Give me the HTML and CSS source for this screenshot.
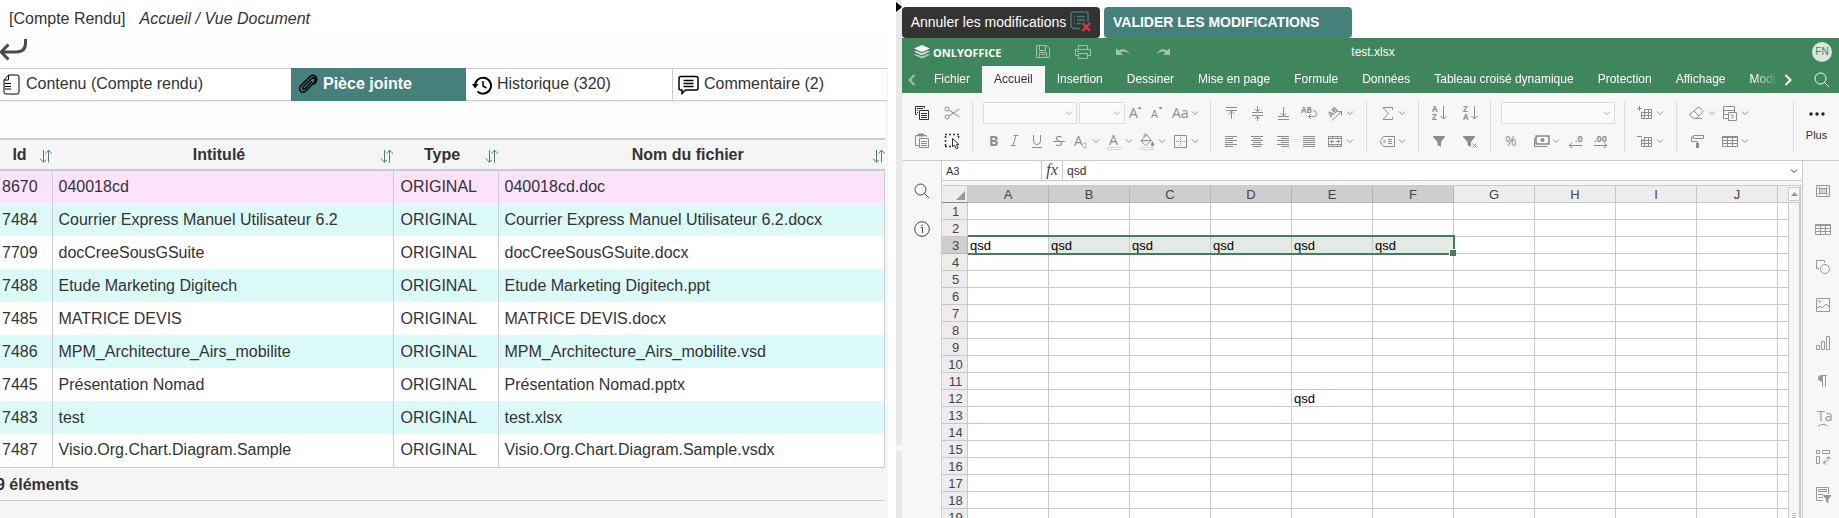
FILE: index.html
```html
<!DOCTYPE html>
<html lang="fr">
<head>
<meta charset="utf-8">
<title>Vue Document</title>
<link rel="stylesheet" href="styles.css">
</head>
<body>
<svg class="defs" aria-hidden="true">
  <symbol id="chev" viewBox="0 0 8 8"><path d="M1 2.5L4 5.5L7 2.5"/></symbol>
  <symbol id="sort" viewBox="0 0 14 14"><path d="M4.5 1V13M.8 9.5L4.5 13.2L7 11M9.500 13.5V1.5M6.500 4.5L9.5 1.2L13 4.5"/></symbol>
  <symbol id="search" viewBox="0 0 16 16"><circle cx="6.5" cy="6.5" r="5.5"/><path d="M10.5 10.5L15 15"/></symbol>
</svg>
<div class="app">
  <section class="doc">
    <header class="crumbs"><span>[Compte Rendu]</span><nav><a href="#">Accueil</a> / <a href="#">Vue Document</a></nav></header>
    <div class="back-row"><button class="back" aria-label="Retour"><svg width="28" height="24" viewBox="0 0 28 24"><path d="M25.500 1V5C25.500 11 22 14 16 14H2M8.500 6.500L1 14L8.500 21.500"/></svg></button></div>
    <nav class="doc-tabs">
      <a href="#" class="tab-content"><svg width="18" height="21" viewBox="0 0 18 21"><path d="M6.500 1H15Q17 1 17 3V18Q17 20 15 20H4Q2 20 2 18V6Z"/><path d="M6.500 1V6H2M3 9.500H9M3 12.500H9M3 15H9"/></svg>Contenu (Compte rendu)</a>
      <a href="#" class="tab-file"><svg width="20" height="21" viewBox="0 0 20 21"><path stroke-width="1.500" d="M14 7.500L7.500 14.500Q6 16 5 15Q4 14 5.500 12.500L13 5Q15 3 16.500 4.500Q18 6 16.500 8L8.500 16.500Q5.500 19.500 3 17.500Q0 15 3 11.500L11.500 3Q14.500 0 17.500 2.500Q20 5.500 17.500 8.500L15.500 10.500"/></svg>Pièce jointe</a>
      <a href="#" class="tab-history"><svg width="20" height="20" viewBox="0 0 20 20"><path stroke-width="2" d="M3 10.500A8 8 0 1 1 5.500 16.500"/><path fill="#000" stroke="none" d="M0 9H6.500L3.200 13.500Z"/><path stroke-width="1.500" d="M11 6V11L14.500 13"/></svg>Historique (320)</a>
      <a href="#" class="tab-comment"><svg width="21" height="20" viewBox="0 0 21 20"><path stroke-width="1.500" d="M2.500 1.500H18Q20 1.500 20 3.500V13Q20 15 18 15H7.500L4 18.500V15H2.500Q1 15 1 13V3.500Q1 1.500 2.500 1.500Z"/><path stroke-width="1.500" d="M5.500 5.500H15.500M5.500 8.500H15.500M5.500 11.500H15.500"/></svg>Commentaire (2)</a>
    </nav>
    <div class="panel-top"></div>
    <table class="files">
      <colgroup><col class="c-id"><col class="c-title"><col class="c-type"><col class="c-name"></colgroup>
      <thead><tr>
        <th class="first"><div><span>Id</span><button aria-label="Trier par id"><svg><use href="#sort"/></svg></button></div></th>
        <th><div><span>Intitulé</span><button aria-label="Trier par intitulé"><svg><use href="#sort"/></svg></button></div></th>
        <th><div><span>Type</span><button aria-label="Trier par type"><svg><use href="#sort"/></svg></button></div></th>
        <th><div><span>Nom du fichier</span><button aria-label="Trier par nom"><svg><use href="#sort"/></svg></button></div></th>
      </tr></thead>
      <tbody>
        <tr class="current"><td>8670</td><td>040018cd</td><td>ORIGINAL</td><td>040018cd.doc</td></tr>
        <tr><td>7484</td><td>Courrier Express Manuel Utilisateur 6.2</td><td>ORIGINAL</td><td>Courrier Express Manuel Utilisateur 6.2.docx</td></tr>
        <tr><td>7709</td><td>docCreeSousGSuite</td><td>ORIGINAL</td><td>docCreeSousGSuite.docx</td></tr>
        <tr><td>7488</td><td>Etude Marketing Digitech</td><td>ORIGINAL</td><td>Etude Marketing Digitech.ppt</td></tr>
        <tr><td>7485</td><td>MATRICE DEVIS</td><td>ORIGINAL</td><td>MATRICE DEVIS.docx</td></tr>
        <tr><td>7486</td><td>MPM_Architecture_Airs_mobilite</td><td>ORIGINAL</td><td>MPM_Architecture_Airs_mobilite.vsd</td></tr>
        <tr><td>7445</td><td>Présentation Nomad</td><td>ORIGINAL</td><td>Présentation Nomad.pptx</td></tr>
        <tr><td>7483</td><td>test</td><td>ORIGINAL</td><td>test.xlsx</td></tr>
        <tr><td>7487</td><td>Visio.Org.Chart.Diagram.Sample</td><td>ORIGINAL</td><td>Visio.Org.Chart.Diagram.Sample.vsdx</td></tr>
      </tbody>
    </table>
    <div class="count">9 éléments</div>
  </section>

  <div class="splitter"><svg width="6" height="10" viewBox="0 0 6 10"><path d="M0 0L6 5L0 10Z"/></svg><i></i></div>

  <section class="office">
    <div class="actions">
      <button class="cancel">Annuler les modifications<svg width="21" height="21" viewBox="0 0 21 21"><path d="M10 17.500H4L1 16V3Q1 1 3 1H16Q18 1 18 3V11M7 5.500H15M7 9H15M7 12.500H11M4 5.500H5M4 9H5M4 12.500H5" stroke="#3d7f76" stroke-width="1.500"/><path d="M12.500 12L20 20M20 12L12.500 20" stroke="#dc3545" stroke-width="2.500"/></svg></button>
      <button class="validate">VALIDER LES MODIFICATIONS</button>
    </div>
    <header class="titlebar">
      <div class="brand"><svg width="16" height="14" viewBox="0 0 16 14"><path d="M8 0L16 3.500L8 7L0 3.500Z" fill="#fff"/><path d="M0 6.500L2 5.700L8 8.300L14 5.700L16 6.500L8 10.200Z" fill="#fff" opacity=".8"/><path d="M0 9.700L2 9L8 11.500L14 9L16 9.700L8 13.500Z" fill="#fff" opacity=".6"/></svg>ONLYOFFICE</div>
      <div class="quick">
        <button aria-label="Enregistrer"><svg class="ic"><path d="M3.500 3.500H13.500L16.500 6.500V15.500H3.500ZM6.500 3.500V8.500H12.500V3.500M6.500 15.500V10.500H13.500V15.500M8 12.500H12"/></svg></button>
        <button aria-label="Imprimer"><svg class="ic"><path d="M5.500 7V3.500H14.500V7M5 13.500H2.500V7.500H17.500V13.500H15M5.500 11.500H14.500V16.500H5.500ZM4 9.500H6"/></svg></button>
        <button aria-label="Annuler"><svg class="ic"><path fill="currentColor" stroke="none" d="M3 6V13H10L7.500 10.500Q12 8 17 12.500Q12.500 4.500 5.500 8.500Z"/></svg></button>
        <button aria-label="Rétablir"><svg class="ic"><path fill="currentColor" stroke="none" d="M17 6V13H10L12.500 10.500Q8 8 3 12.500Q7.500 4.500 14.500 8.500Z"/></svg></button>
      </div>
      <span class="filename">test.xlsx</span>
      <span class="avatar">FN</span>
    </header>
    <nav class="ribbon-tabs">
      <button class="scroll prev" aria-label="Précédent"><svg width="8" height="12" viewBox="0 0 8 12"><path d="M6.500 1L1.500 6L6.500 11"/></svg></button>
      <div class="tab-list"><a href="#">Fichier</a><a href="#" class="on">Accueil</a><a href="#">Insertion</a><a href="#">Dessiner</a><a href="#">Mise en page</a><a href="#">Formule</a><a href="#">Données</a><a href="#">Tableau croisé dynamique</a><a href="#">Protection</a><a href="#">Affichage</a><a href="#">Modules</a></div>
      <button class="scroll next" aria-label="Suivant"><svg width="8" height="12" viewBox="0 0 8 12"><path d="M1.500 1L6.500 6L1.500 11"/></svg></button>
      <button class="find" aria-label="Rechercher"><svg width="16" height="16"><use href="#search"/></svg></button>
    </nav>

    <div class="toolbar">
      <div class="group clip">
        <div class="line"><button class="dark" aria-label="Copier"><svg class="ic"><path d="M5 11.500H3.500V3.500H12.500V5M5 5.500H11M5 7.500H6M5 9.500H6M7.500 7.500H16.500V16.500H7.500ZM9 10.500H15M9 12.500H15M9 14.500H15"/></svg></button><button aria-label="Couper"><svg class="ic"><circle cx="5" cy="6" r="2"/><circle cx="5" cy="14" r="2"/><path d="M7 7L17.500 14M7 13L17.500 6"/></svg></button></div>
        <div class="line"><button aria-label="Coller"><svg class="ic"><path d="M7 14.500H3.500V4.500H14.500V6M7.500 7.500H16.500V16.500H7.500ZM9 10.500H15M9 12.500H15M9 14.500H15"/><path d="M6 4H12" stroke-width="3"/></svg></button><button class="dark" aria-label="Sélectionner tout"><svg class="ic"><path stroke-dasharray="2 2" stroke-width="1.500" d="M3 3.500H17M3.500 5V17M3 15.500H9M16.500 5V9"/><path d="M10.500 7.500V16L12.500 14L14.500 18L16 17L14.500 13.500H17Z"/></svg></button></div>
      </div>
      <div class="group font">
        <div class="line combo-line"><select class="w-font" aria-label="Police"></select><select class="w-size" aria-label="Taille"></select><button class="lt" aria-label="Agrandir"><svg class="ic"><text x="3" y="15">A</text><path class="solid" d="M11.500 6L13.500 3.500L15.500 6Z"/></svg></button><button class="lt" aria-label="Réduire"><svg class="ic"><text x="3" y="15" class="sm">A</text><path class="solid" d="M10.500 4L12.500 6.500L14.500 4Z"/></svg></button><button class="drop" aria-label="Casse"><svg class="ic"><text x="2" y="15">Aa</text></svg><svg class="cv"><use href="#chev"/></svg></button></div>
        <div class="line"><button aria-label="Gras"><svg class="ic"><text x="6" y="15" class="b">B</text></svg></button><button aria-label="Italique"><svg class="ic"><path d="M8.500 4.500H13.500M5.500 14.500H10.500M11 4.500L8 14.500"/></svg></button><button aria-label="Souligné"><svg class="ic"><path d="M6.500 4V10Q6.500 13.500 10 13.500Q13.500 13.500 13.500 10V4M5 16.500H15"/></svg></button><button aria-label="Barré"><svg class="ic"><text x="6" y="15">S</text><path d="M4 10.500H16"/></svg></button><button class="drop" aria-label="Indice"><svg class="ic"><text x="3" y="15">A</text><text x="12" y="17" class="xs">2</text></svg><svg class="cv"><use href="#chev"/></svg></button><button class="drop" aria-label="Couleur"><svg class="ic"><text x="5" y="14">A</text><path class="swatch" d="M3.500 16.500H16.500V18.500H3.500Z"/></svg><svg class="cv"><use href="#chev"/></svg></button><button class="drop" aria-label="Remplissage"><svg class="ic"><path d="M4.500 9L9.500 4L14.500 9.500L9.500 14Q8.500 14.500 7.500 13.500L4.500 10.500ZM5 9.500H14M7 6V5Q7 2.500 9 3L10.500 5"/><path class="solid" d="M15.500 10Q17.500 13 17 14.500Q15.500 16 14 14.500Q13.500 13 15.500 10Z"/><path class="swatch" d="M3.500 16.500H16.500V18.500H3.500Z"/></svg><svg class="cv"><use href="#chev"/></svg></button><button class="drop" aria-label="Bordures"><svg class="ic"><path d="M4.500 4.500H16.500V16.500H4.500Z"/><path stroke-dasharray="1 1" d="M10.500 6V16M6 10.500H16"/></svg><svg class="cv"><use href="#chev"/></svg></button></div>
      </div>
      <div class="group wide">
        <div class="line"><button aria-label="Aligner en haut"><svg class="ic"><path d="M5 4.500H16M5 7.500H16M10.500 16V8M7.500 11L10.500 8L13.500 11"/></svg></button><button aria-label="Aligner au milieu"><svg class="ic"><path d="M5 9.500H16M5 12.500H16M10.500 3V9M8 6L10.500 8.500L13 6M10.500 18V13M8 16L10.500 13.500L13 16"/></svg></button><button aria-label="Aligner en bas"><svg class="ic"><path d="M5 13.500H16M5 16.500H16M10.500 4V13M7.500 10L10.500 13L13.500 10"/></svg></button><button aria-label="Renvoi à la ligne"><svg class="ic"><text x="2" y="10" class="xb">AB</text><path d="M14 7.500Q17.500 7.500 17.500 11Q17.500 13.500 15 13.500H10M12 11L9.500 13.500L12 16"/></svg></button><button class="drop" aria-label="Orientation"><svg class="ic"><text x="3" y="12" class="xb" transform="rotate(-45 8 10)">AB</text><path d="M7 17.500L16.500 8.500M12.500 8.500H16.500V12.500"/></svg><svg class="cv"><use href="#chev"/></svg></button></div>
        <div class="line"><button aria-label="Gauche"><svg class="ic"><path d="M4 5.500H16M4 7.500H12M4 9.500H16M4 11.500H12M4 13.500H16M4 15.500H12"/></svg></button><button aria-label="Centrer"><svg class="ic"><path d="M4 5.500H16M6 7.500H14M4 9.500H16M6 11.500H14M4 13.500H16M6 15.500H14"/></svg></button><button aria-label="Droite"><svg class="ic"><path d="M4 5.500H16M8 7.500H16M4 9.500H16M8 11.500H16M4 13.500H16M8 15.500H16"/></svg></button><button aria-label="Justifier"><svg class="ic"><path d="M4 5.500H16M4 7.500H16M4 9.500H16M4 11.500H16M4 13.500H16M4 15.500H16"/></svg></button><button class="drop" aria-label="Fusionner"><svg class="ic"><path d="M3.500 5.500H16.500V15.500H3.500ZM3.500 7.500H16.500M3.500 13.500H16.500M7.500 5V7M12.500 5V7M7.500 14V16M12.500 14V16M5 10.500H9M11 10.500H15M7 9L5.500 10.500L7 12M13 9L14.500 10.500L13 12"/></svg><svg class="cv"><use href="#chev"/></svg></button></div>
      </div>
      <div class="group">
        <div class="line"><button class="drop" aria-label="Somme"><svg class="ic"><path d="M15.500 7V4.500H6L11.500 10.500L6 16.500H15.500V14"/></svg><svg class="cv"><use href="#chev"/></svg></button></div>
        <div class="line"><button class="drop" aria-label="Plages nommées"><svg class="ic"><path d="M3 10.500L6.500 5.500H17.500V15.500H6.500ZM11 8.500H15M11 10.500H15M11 12.500H15"/><circle cx="7.500" cy="10.500" r="1"/></svg><svg class="cv"><use href="#chev"/></svg></button></div>
      </div>
      <div class="group filters">
        <div class="line"><button aria-label="Tri croissant"><svg class="ic"><text x="3" y="9" class="xb">A</text><text x="3" y="17" class="xb">Z</text><path d="M14.500 3V16M11.500 13L14.500 16L17.500 13"/></svg></button><button aria-label="Tri décroissant"><svg class="ic"><text x="3" y="9" class="xb">Z</text><text x="3" y="17" class="xb">A</text><path d="M14.500 3V16M11.500 13L14.500 16L17.500 13"/></svg></button></div>
        <div class="line"><button aria-label="Filtrer"><svg class="ic"><path class="solid" d="M4 5H16V6L12 11V16L8.500 14V11L4 6Z"/></svg></button><button aria-label="Effacer le filtre"><svg class="ic"><path class="solid" d="M3 5H15V6L11 11V16L7.500 14V11L3 6Z"/><path d="M12.500 12.500L16.500 16.500M16.500 12.500L12.500 16.500"/></svg></button></div>
      </div>
      <div class="group">
        <div class="line combo-line"><select class="w-format" aria-label="Format de nombre"></select></div>
        <div class="line formats"><button class="percent" aria-label="Pourcentage"><svg class="ic"><text x="4" y="15">%</text></svg></button><button class="drop" aria-label="Devise"><svg class="ic"><path stroke-width="1.500" d="M5 5H18V13H5Z"/><path d="M3.500 7V15.500H16"/><circle class="solid" cx="11.500" cy="9" r="2"/><path d="M5 7L7 5M16 5L18 7M5 11L7 13M16 13L18 11"/></svg><svg class="cv"><use href="#chev"/></svg></button><button aria-label="Réduire les décimales"><svg class="ic"><text x="9" y="11" class="dec">.0</text><path d="M16 14.500H3M6 12L3.500 14.500L6 17"/></svg></button><button aria-label="Ajouter une décimale"><svg class="ic"><text x="4" y="11" class="dec">.00</text><path d="M4 14.500H17M14 12L16.500 14.500L14 17"/></svg></button></div>
      </div>
      <div class="group">
        <div class="line"><button class="drop" aria-label="Insérer des cellules"><svg class="ic"><path d="M2 5.500H7M4.500 3V8M9 6.500H16.500V15.500H6.500V9M6.500 9.500H16.500M6.500 12.500H16.500M9.500 6.500V15.500M13.500 6.500V15.500"/></svg><svg class="cv"><use href="#chev"/></svg></button></div>
        <div class="line"><button class="drop" aria-label="Supprimer des cellules"><svg class="ic"><path d="M2 5.500H7M9 6.500H16.500V15.500H6.500V8M6.500 9.500H16.500M6.500 12.500H16.500M9.500 6.500V15.500M13.500 6.500V15.500"/></svg><svg class="cv"><use href="#chev"/></svg></button></div>
      </div>
      <div class="group last">
        <div class="line"><button class="drop" aria-label="Effacer"><svg class="ic"><path d="M3 11L11 4.500Q12 4 13 5L15.500 7.500Q16.500 8.500 15.500 9.500L9 15.500H7L3.500 13Q2.500 12 3 11ZM7 8L12 13M9 15.500H15"/></svg><svg class="cv"><use href="#chev"/></svg></button><button class="drop" aria-label="Mise en forme conditionnelle"><svg class="ic"><path d="M8 15.500H3.500V3.500H14.500V9M3.500 7.500H14.500M3.500 11.500H8M8.500 9.500H16.500V17.500H8.500ZM11 11.500L13.500 13.500L11 15.500"/></svg><svg class="cv"><use href="#chev"/></svg></button></div>
        <div class="line"><button class="drop" aria-label="Copier le style"><svg class="ic"><path d="M6.500 4.500H16.500V7.500H6.500ZM6.500 6H4.500V10.500H10.500V12"/><path d="M10.500 12V17" stroke-width="3"/></svg></button><button class="drop" aria-label="Mettre en tableau"><svg class="ic"><path d="M2.500 5.500H17.500V15.500H2.500ZM2.500 9.500H17.500M2.500 12.500H17.500M7.500 5.500V15.500M12.500 5.500V15.500M2.500 6.500H17.500"/></svg><svg class="cv"><use href="#chev"/></svg></button></div>
      </div>
      <button class="more"><svg width="16" height="4" viewBox="0 0 16 4"><circle cx="2" cy="2" r="1.700"/><circle cx="8" cy="2" r="1.700"/><circle cx="14" cy="2" r="1.700"/></svg>Plus</button>
    </div>

    <div class="work">
      <aside class="side left"><button aria-label="Rechercher"><svg width="16" height="16"><use href="#search"/></svg></button><button aria-label="À propos"><svg width="16" height="16" viewBox="0 0 16 16"><circle cx="8" cy="8" r="7.300"/><path d="M7 6.500H8.500V12M8 3.500V5"/></svg></button></aside>
      <div class="center">
        <div class="formula"><input class="cell-name" aria-label="Zone de nom" value="A3"><span class="fx">fx</span><input class="expr" aria-label="Formule" value="qsd"><button aria-label="Développer"><svg class="cv"><use href="#chev"/></svg></button></div>
        <div class="sheet">
          <div class="grid-wrap">
          <table class="grid">
            <thead><tr><th class="corner"><svg width="9" height="9" viewBox="0 0 9 9"><path d="M9 0V9H0Z"/></svg></th><th class="sel">A</th><th class="sel">B</th><th class="sel">C</th><th class="sel">D</th><th class="sel">E</th><th class="sel">F</th><th>G</th><th>H</th><th>I</th><th>J</th><th></th></tr></thead>
            <tbody>
            <tr><th>1<td><td><td><td><td><td><td><td><td><td><td>
            <tr><th>2<td><td><td><td><td><td><td><td><td><td><td>
            <tr class="picked"><th>3<td>qsd<td>qsd<td>qsd<td>qsd<td>qsd<td>qsd<td><td><td><td><td>
            <tr><th>4<td><td><td><td><td><td><td><td><td><td><td>
            <tr><th>5<td><td><td><td><td><td><td><td><td><td><td>
            <tr><th>6<td><td><td><td><td><td><td><td><td><td><td>
            <tr><th>7<td><td><td><td><td><td><td><td><td><td><td>
            <tr><th>8<td><td><td><td><td><td><td><td><td><td><td>
            <tr><th>9<td><td><td><td><td><td><td><td><td><td><td>
            <tr><th>10<td><td><td><td><td><td><td><td><td><td><td>
            <tr><th>11<td><td><td><td><td><td><td><td><td><td><td>
            <tr><th>12<td><td><td><td><td>qsd<td><td><td><td><td><td>
            <tr><th>13<td><td><td><td><td><td><td><td><td><td><td>
            <tr><th>14<td><td><td><td><td><td><td><td><td><td><td>
            <tr><th>15<td><td><td><td><td><td><td><td><td><td><td>
            <tr><th>16<td><td><td><td><td><td><td><td><td><td><td>
            <tr><th>17<td><td><td><td><td><td><td><td><td><td><td>
            <tr><th>18<td><td><td><td><td><td><td><td><td><td><td>
            <tr><th>19<td><td><td><td><td><td><td><td><td><td><td>
            </tbody>
          </table>
          <div class="selection"></div>
          </div>
          <div class="scrollbar"><button aria-label="Défiler vers le haut"><svg width="7" height="4" viewBox="0 0 7 4"><path d="M0 4L3.500 0L7 4Z"/></svg></button><div class="thumb"><i></i></div></div>
        </div>
      </div>
      <aside class="side right">
        <button aria-label="Cellule"><svg class="ic"><path d="M3.500 4.500H16.500V15.500H3.500ZM3 7.500H17M3 12.500H17M6.500 4V16M13.500 4V16" opacity=".6"/><path d="M3.500 4.500H16.500V15.500H3.500Z"/><path d="M6.500 7.500H13.500V12.500H6.500Z" fill="#d0d0d0"/></svg></button>
        <button aria-label="Tableau"><svg class="ic"><path d="M2.500 5.500H17.500V15.500H2.500ZM2.500 9.500H17.500M2.500 12.500H17.500M7.500 5.500V15.500M12.500 5.500V15.500M2.500 6.500H17.500"/></svg></button>
        <button aria-label="Forme"><svg class="ic"><path d="M6 11.500H3.500V3.500H11.500V6"/><circle cx="12" cy="12" r="4.500"/></svg></button>
        <button aria-label="Image"><svg class="ic"><path d="M3.500 3.500H16.500V16.500H3.500ZM4 13L7 11L9 13L13 9L16 12"/><circle cx="6.500" cy="6.500" r="1"/></svg></button>
        <button aria-label="Graphique"><svg class="ic"><path d="M3.500 12.500H6.500V16.500H3.500ZM8.500 8.500H11.500V16.500H8.500ZM13.500 3.500H16.500V16.500H13.500Z"/></svg></button>
        <button aria-label="Paragraphe"><svg class="ic"><path d="M9.500 4V16M12.500 4V16M8 4.500H14"/><path class="solid" d="M10 4H8Q5 4.500 5 7.500Q5 10 9 10.500Z"/></svg></button>
        <button aria-label="Texte Art"><svg class="ic"><text x="4" y="12">Ta</text><path d="M5 17.500Q10 13 15 17.500"/></svg></button>
        <button aria-label="Tableau croisé"><svg class="ic"><path d="M3.500 3.500H6.500V6.500H3.500ZM9.500 3.500H16.500V6.500H9.500ZM3.500 9.500H6.500V16.500H3.500ZM11 15.500Q15.500 15.500 15.500 10M13 12L15.500 9.500L17.500 12M12.500 13L10 15.500L12.500 17.500"/></svg></button>
        <button aria-label="Segment"><svg class="ic"><path d="M10 15.500H3.500V2.500H15.500V9M5.500 4.500H13.500V6.500H5.500ZM5 9.500H10M5 12.500H10"/><path class="solid" d="M10 10H18V11L15.500 14V18L13 17V14L10 11Z"/></svg></button>
      </aside>
    </div>
  </section>
</div>
</body>
</html>
```

FILE: styles.css
```css
* { box-sizing: border-box; }
body { margin: 0; font-family: "Liberation Sans", Arial, sans-serif; color: #333; background: #fff; }
button { margin: 0; padding: 0; border: 0; background: none; font: inherit; color: inherit; display: flex; align-items: center; justify-content: center; }
a { color: inherit; text-decoration: none; }
svg { display: block; fill: none; stroke: currentColor; flex: none; }
.defs { position: absolute; width: 0; height: 0; }

.app { display: grid; grid-template-columns: minmax(0, 896fr) 6px minmax(0, 937fr); height: 100vh; overflow: hidden; }

/* document pane */
.doc { margin-right: 8px; background: #f5f5f5; font-size: 16px; overflow: hidden; }
.crumbs { display: flex; gap: 14px; height: 32px; padding: 5px 0 0 9px; line-height: 27px; background: #fff; }
.crumbs nav { font-style: italic; }
.back-row { height: 36px; padding-top: 6px; background: #fdfdfd; }
.back svg { stroke: #4a4a4f; stroke-width: 3; }
.doc-tabs { display: grid; grid-template-columns: 291fr 175fr 207fr 215fr; height: 33px; }
.doc-tabs a { display: flex; align-items: center; padding: 0 0 2px 6px; gap: 5px; border: 1px solid #c8ccd6; border-left: 0; background: #fff; }
.doc-tabs svg { stroke: #000; margin-top: 2px; }
.doc-tabs .tab-content { padding-left: 2px; gap: 6px; border-right: 0; }
.doc-tabs .tab-file { padding-left: 7px; background: #45817a; border-color: #45817a; color: #fff; font-weight: bold; }
.doc-tabs .tab-comment { padding-left: 5px; border-right-color: #dcf9f8; }
.panel-top { height: 35px; margin: 2px 3px 0 0; background: #fdfdfd; }
.files { width: calc(100% - 3px); table-layout: fixed; border-collapse: collapse; background: #fff; }
.c-id { width: 52px; }
.c-title { width: 341px; }
.c-type { width: 105px; }
.files thead { background: #f5f5f5; }
.files th { height: 31px; padding: 0 0 0 6px; border: solid #c8ccd6; border-width: 2px 0; }
.files .first { padding-left: 0; }
.files th div { display: flex; align-items: center; margin-right: -1px; }
.files th span { flex: 1; }
.files th button { color: #45817a; padding-top: 2px; }
.files th svg { width: 14px; height: 14px; }
.files td { height: 33px; padding: 0 6px; border: solid #c8ccd6; border-width: 0 1px; white-space: nowrap; }
.files td:first-child { padding-left: 2px; border-left: 0; }
.files td:nth-child(3) { padding-left: 7px; }
.files tbody tr:nth-child(even) { background: #dcfaf8; }
.files tbody .current { background: #fce2fc; }
.files tbody tr:last-child { border-bottom: 1px solid #c8ccd6; }
.count { height: 33px; margin: 0 3px 0 -4px; line-height: 34px; font-weight: bold; border-bottom: 1px solid #c8ccd6; }

.splitter { display: flex; flex-direction: column; background: #e9e9e9; padding-top: 2px; }
.splitter svg { fill: #000; stroke: none; }
.splitter i { height: 6px; margin-top: 433px; background: #f6f6f6; }

/* editor pane */
.office { display: flex; flex-direction: column; overflow: hidden; background: #f7f7f7; }
.actions { display: flex; gap: 4px; padding-top: 7px; background: #fff; font-size: 14px; color: #fff; }
.actions button { height: 31px; border-radius: 4px; white-space: nowrap; }
.actions .cancel { width: 198px; padding-bottom: 2px; background: #333; gap: 4px; }
.actions .validate { width: 248px; padding: 0 0 2px 9px; justify-content: flex-start; background: #45817a; font-weight: bold; }

.titlebar { display: grid; grid-template-columns: 131px 1fr auto 1fr 32px; align-items: center; height: 28px; background: #40865c; color: #fff; font-size: 12px; }
.brand { display: flex; align-items: center; gap: 3px; padding-left: 12px; font: bold 11px "Open Sans", "Noto Sans", sans-serif; }
.brand svg { stroke: none; }
.quick { display: flex; gap: 20px; opacity: .5; }
.filename { margin-right: 94px; }
.avatar { grid-column: 5; width: 20px; height: 20px; border-radius: 10px; margin-left: 5px; background: #d9e7de; color: #40865c; font-size: 10px; line-height: 20px; text-align: center; }
.ic { width: 20px; height: 20px; }
.ic text { fill: currentColor; stroke: none; font: 14px "Open Sans", "Noto Sans", sans-serif; }
.ic .sm { font-size: 11px; }
.ic .b { font-weight: bold; }
.ic .xs { font-size: 7px; }
.ic .xb { font-size: 8px; font-weight: bold; }
.ic .dec { font-size: 9px; font-weight: bold; }
.ic .solid { fill: currentColor; stroke: none; }
.ic .swatch { fill: #fff; stroke: #d5d5d5; }

.ribbon-tabs { display: flex; height: 27px; background: #40865c; color: #fff; font-size: 12px; }
.scroll { width: 20px; stroke-width: 2; }
.prev { opacity: .5; }
.tab-list { display: flex; flex: 1; overflow: hidden; -webkit-mask-image: linear-gradient(to left, transparent 0, #000 24px); mask-image: linear-gradient(to left, transparent 0, #000 24px); }
.tab-list a { padding: 0 12px; line-height: 26px; white-space: nowrap; }
.tab-list .on { background: #f7f7f7; color: #333; }
.find { width: 41px; padding-left: 6px; }

.toolbar { display: flex; height: 68px; padding: 8px 0 7px; border-bottom: 1px solid #cbcbcb; color: #8d8d8d; }
.group { display: flex; flex-direction: column; justify-content: space-between; height: 52px; padding: 0 9px; border-right: 1px solid #dcdcdc; }
.line { display: flex; height: 24px; align-items: center; }
.line button { width: 22px; height: 24px; }
.line .drop { width: 33px; justify-content: flex-start; padding-left: 1px; gap: 1px; }
.cv { width: 8px; height: 8px; }
.clip { padding: 0 5px; }
.clip .line button { width: 30px; }
.font { padding-right: 8px; }
.dark { color: #333; }
.combo-line { padding-left: 1px; }
.wide .line { gap: 4px; }
.filters .line { gap: 9px; }
.formats { gap: 2px; }
.percent { margin-right: 6px; }
.last { flex: 1; }
select { height: 22px; border: 1px solid #dcdcdc; border-radius: 1px; appearance: none; background: #fafafa url("data:image/svg+xml,%3Csvg xmlns='http://www.w3.org/2000/svg' width='8' height='8' fill='none' stroke='%23aaa'%3E%3Cpath d='M1 2.500L4 5.500L7 2.500'/%3E%3C/svg%3E") no-repeat right 3px center; }
.w-font { width: 94px; margin-right: 2px; }
.w-size { width: 46px; }
.w-format { width: 114px; }
.more { flex-direction: column; justify-content: flex-start; gap: 13px; width: 45px; padding-top: 11px; color: #333; font-size: 11px; }
.more svg { fill: #222; stroke: none; }

.work { display: flex; flex: 1; min-height: 0; }
.side { display: flex; flex-direction: column; gap: 18px; padding-top: 20px; }
.side button { height: 20px; flex: none; }
.left { width: 40px; border-right: 1px solid #cbcbcb; color: #444; }
.right { width: 37px; padding-left: 4px; border-left: 1px solid #cbcbcb; color: #999; }
.center { display: flex; flex: 1; flex-direction: column; min-width: 0; }
.formula { display: flex; height: 20px; background: #fff; border-bottom: 1px solid #cbcbcb; font-size: 11px; }
.formula input { border: 0; padding: 0 4px; background: #fff; font: inherit; color: #333; }
.formula .cell-name { width: 99px; }
.formula .fx { width: 22px; border: solid #cbcbcb; border-width: 0 1px; text-align: center; font: italic 16px/18px "Liberation Serif", serif; color: #444; }
.formula .expr { flex: 1; min-width: 0; font-size: 12px; }
.formula button { width: 16px; color: #333; }
.sheet { display: flex; flex: 1; min-height: 0; margin-top: 4px; border-top: 1px solid #cbcbcb; }
.grid-wrap { position: relative; flex: 1; min-width: 0; overflow: hidden; }
.grid { width: 100%; table-layout: fixed; border-collapse: separate; border-spacing: 0; background: #fff; font-size: 13px; line-height: 14px; }
.grid th, .grid td { height: 17px; padding: 2px 0 0 2px; border: solid #c8c8c8; border-width: 0 1px 1px 0; overflow: hidden; color: #000; }
.grid th { width: 81px; padding: 2px 0 0; background: #ededed; color: #444; font-weight: normal; }
.grid tbody th { padding-left: 2px; }
.grid th:last-child { width: auto; }
.grid tr > :last-child { border-right: 0; }
.grid .corner { width: 26px; padding: 0; border-bottom-color: #888; }
.corner svg { margin: 2px 0 0 14px; fill: #999; stroke: none; }
.grid .sel, .grid .picked th { background: #cecece; border-color: #b5b5b5; }
.picked td:nth-child(n+3):nth-child(-n+7) { background: #e3e9e5; }
.selection { position: absolute; left: 26px; top: 49px; width: 487px; height: 20px; border: 2px solid #467c58; border-left: 0; }
.selection::after { content: ""; position: absolute; right: -3px; bottom: -3px; width: 6px; height: 6px; background: #467c58; border: solid #fff; border-width: 1px 0 0 1px; }
.scrollbar { display: flex; flex-direction: column; gap: 1px; width: 13px; margin-right: 1px; padding-top: 1px; border-right: 1px solid #cbcbcb; }
.scrollbar button { height: 14px; border: 1px solid #cbcbcb; color: #999; }
.scrollbar svg { fill: currentColor; stroke: none; }
.thumb { position: relative; flex: 1; border: 1px solid #cbcbcb; border-bottom: 0; }
.thumb i { position: absolute; left: 3px; right: 3px; bottom: 0; height: 5px; background: repeating-linear-gradient(#bbb 0 1px, transparent 1px 2px); }
```
